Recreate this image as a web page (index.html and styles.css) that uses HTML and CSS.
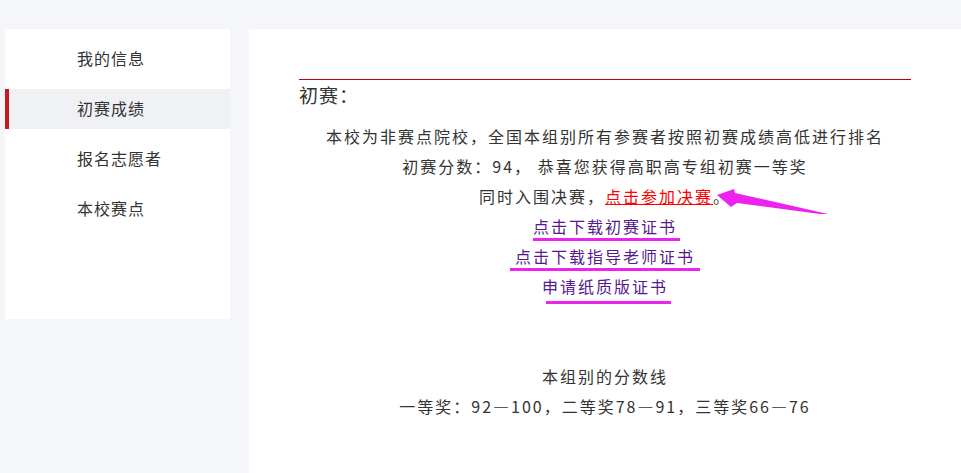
FILE: index.html
```html
<!DOCTYPE html>
<html lang="zh-CN">
<head>
<meta charset="utf-8">
<title>初赛成绩</title>
<link rel="stylesheet" href="styles.css">
</head>
<body>
<div class="page">
  <aside class="sidebar">
    <div class="nav-item">我的信息</div>
    <div class="nav-item active">初赛成绩</div>
    <div class="nav-item">报名志愿者</div>
    <div class="nav-item">本校赛点</div>
  </aside>
  <main class="main">
    <div class="rule"></div>
    <div class="title">初赛：</div>
    <div class="content">
      <p class="line">本校为非赛点院校，全国本组别所有参赛者按照初赛成绩高低进行排名</p>
      <p class="line">初赛分数：94， 恭喜您获得高职高专组初赛一等奖</p>
      <p class="line">同时入围决赛，<a class="final-link" href="#">点击参加决赛</a>。</p>
      <p class="line"><a class="cert cert-1" href="#">点击下载初赛证书</a></p>
      <p class="line"><a class="cert cert-2" href="#">点击下载指导老师证书</a></p>
      <p class="line"><a class="cert cert-3" href="#">申请纸质版证书</a></p>
      <p class="line score-head">本组别的分数线</p>
      <p class="line">一等奖：92—100，二等奖78—91，三等奖66—76</p>
    </div>
    <svg class="arrow" width="140" height="50" viewBox="0 0 140 50">
      <polygon points="17,15 34,9 35,13 128,34 120,34 37,23 31,27" fill="#ee22ee"/>
    </svg>
  </main>
</div>
</body>
</html>
```

FILE: styles.css
```css
html, body {
  margin: 0;
  padding: 0;
}

body {
  background: #f5f6fa;
  font-family: "Noto Sans CJK SC", "Noto Sans", sans-serif;
  color: #333333;
}

.page {
  display: flex;
  align-items: flex-start;
  gap: 19px;
  padding: 29px 0 0 5px;
}

.sidebar {
  width: 225px;
  height: 290px;
  box-sizing: border-box;
  background: #ffffff;
  padding-top: 10px;
  display: flex;
  flex-direction: column;
  gap: 10px;
}

.nav-item {
  height: 40px;
  line-height: 39px;
  padding-left: 72px;
  font-size: 16px;
  letter-spacing: 1px;
  color: #333333;
  box-sizing: border-box;
}

.nav-item.active {
  background: #f0f1f5;
  border-left: 4px solid #c8191e;
  padding-left: 68px;
}

.main {
  position: relative;
  flex: 1;
  min-height: 444px;
  box-sizing: border-box;
  background: #ffffff;
  padding: 50px 50px 20px 50px;
}

.rule {
  height: 0;
  border-top: 1px solid #c40000;
}

.title {
  font-size: 19px;
  line-height: 30px;
  letter-spacing: 1px;
  color: #333333;
}

.content {
  margin-top: 11px;
  text-align: center;
}

.line {
  margin: 0;
  font-size: 16px;
  line-height: 30px;
  letter-spacing: 2px;
  color: #333333;
}

.score-head {
  margin-top: 60px;
}

.final-link {
  color: #ff0000;
  text-decoration: underline;
}

.cert {
  position: relative;
  display: inline-block;
  color: #551a8b;
  text-decoration: none;
}

.cert::after {
  content: "";
  position: absolute;
  height: 3px;
  background: #ee22ee;
}

.cert-1::after {
  left: 0;
  right: -3px;
  bottom: 0;
}

.cert-2::after {
  left: -5px;
  right: -5px;
  bottom: 0;
}

.cert-3::after {
  left: 4px;
  right: -3px;
  bottom: -3px;
}

.arrow {
  position: absolute;
  left: 451px;
  top: 151px;
}
```
